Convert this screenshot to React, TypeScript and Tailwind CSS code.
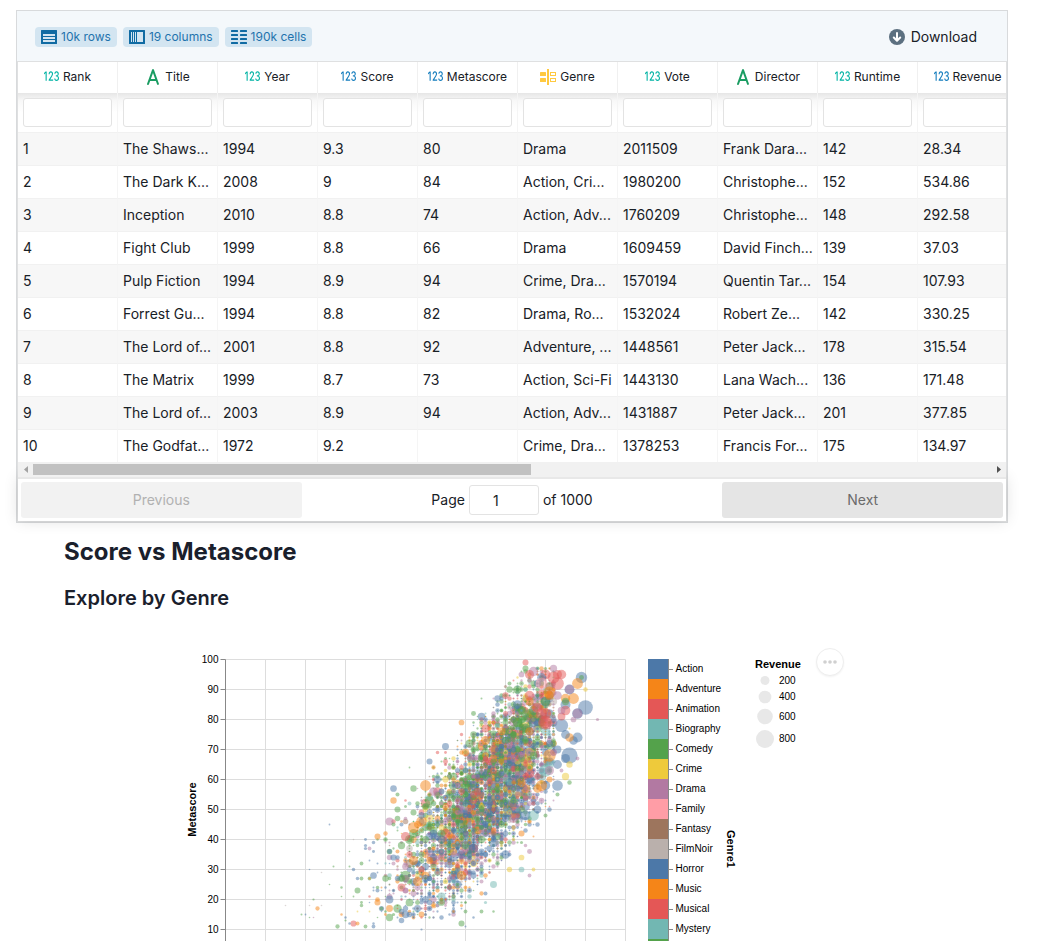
import React from "react";
import { Bs123 } from "react-icons/bs";

type IconKind = "int" | "float" | "text" | "category";

const columns: { name: string; kind: IconKind }[] = [
  { name: "Rank", kind: "int" },
  { name: "Title", kind: "text" },
  { name: "Year", kind: "int" },
  { name: "Score", kind: "float" },
  { name: "Metascore", kind: "float" },
  { name: "Genre", kind: "category" },
  { name: "Vote", kind: "int" },
  { name: "Director", kind: "text" },
  { name: "Runtime", kind: "int" },
  { name: "Revenue", kind: "float" },
];

const rows: string[][] = [
  ["1", "The Shaws...", "1994", "9.3", "80", "Drama", "2011509", "Frank Dara...", "142", "28.34"],
  ["2", "The Dark K...", "2008", "9", "84", "Action, Cri...", "1980200", "Christophe...", "152", "534.86"],
  ["3", "Inception", "2010", "8.8", "74", "Action, Adv...", "1760209", "Christophe...", "148", "292.58"],
  ["4", "Fight Club", "1999", "8.8", "66", "Drama", "1609459", "David Finch...", "139", "37.03"],
  ["5", "Pulp Fiction", "1994", "8.9", "94", "Crime, Dra...", "1570194", "Quentin Tar...", "154", "107.93"],
  ["6", "Forrest Gu...", "1994", "8.8", "82", "Drama, Ro...", "1532024", "Robert Ze...", "142", "330.25"],
  ["7", "The Lord of...", "2001", "8.8", "92", "Adventure, ...", "1448561", "Peter Jack...", "178", "315.54"],
  ["8", "The Matrix", "1999", "8.7", "73", "Action, Sci-Fi", "1443130", "Lana Wach...", "136", "171.48"],
  ["9", "The Lord of...", "2003", "8.9", "94", "Action, Adv...", "1431887", "Peter Jack...", "201", "377.85"],
  ["10", "The Godfat...", "1972", "9.2", "", "Crime, Dra...", "1378253", "Francis For...", "175", "134.97"],
];

function ColumnIcon({ kind }: { kind: IconKind }) {
  if (kind === "int" || kind === "float")
    return (
      <Bs123
        preserveAspectRatio="none"
        className={
          kind === "int"
            ? "h-[21px] w-[15px] shrink-0 text-[#00b3a4]"
            : "h-[21px] w-[15px] shrink-0 text-[#137cbd]"
        }
        aria-hidden
      />
    );
  if (kind === "text")
    return (
      <svg viewBox="0 0 16 16" className="size-4 shrink-0 fill-[#1a9c62]" aria-hidden>
        <path
          fillRule="evenodd"
          d="M13.93 14.67L8.94.67h-.01C8.79.28 8.43 0 8 0s-.79.28-.93.67h-.01l-5 14h.01c-.04.1-.07.21-.07.33a1 1 0 0 0 1.94.33L5.13 12h5.74l1.19 3.33a1 1 0 0 0 1.87-.66zM5.85 10L8 3.97 10.15 10h-4.3z"
        />
      </svg>
    );
  return (
    <svg viewBox="0 0 16 16" className="size-4 shrink-0" aria-hidden>
      <g fill="#ffc940">
        <rect x="7" y="0" width="2" height="16" />
        <rect x="0" y="3" width="6" height="4" rx=".5" />
        <rect x="0" y="9" width="6" height="4" rx=".5" />
      </g>
      <g fill="none" stroke="#ffc940">
        <rect x="10.5" y="3.5" width="5" height="3" />
        <rect x="10.5" y="9.5" width="5" height="3" />
      </g>
    </svg>
  );
}

function RowsIcon() {
  return (
    <svg viewBox="0 0 16 16" className="size-4" aria-hidden>
      <path
        fill="#106ba3"
        fillRule="evenodd"
        d="M.5 1h15a.5.5 0 0 1 .5.5v13a.5.5 0 0 1-.5.5H.5a.5.5 0 0 1-.5-.5v-13A.5.5 0 0 1 .5 1zM2 5v2h12V5zM2 8v2h12V8zM2 11v2h12v-2z"
      />
    </svg>
  );
}

function ColumnsIcon() {
  return (
    <svg viewBox="0 0 16 16" className="size-4" aria-hidden>
      <path
        fill="#106ba3"
        fillRule="evenodd"
        d="M.5 1h15a.5.5 0 0 1 .5.5v13a.5.5 0 0 1-.5.5H.5a.5.5 0 0 1-.5-.5v-13A.5.5 0 0 1 .5 1zM2 3v10h1V3zM4 3v10h1V3zM6 3v10h1V3zM8 3v10h6V3z"
      />
    </svg>
  );
}

function CellsIcon() {
  return (
    <svg viewBox="0 0 16 16" className="size-4" aria-hidden fill="#106ba3">
      {[1, 5, 9, 13].map((y) => (
        <g key={y}>
          <rect x="0" y={y} width="7" height="2" rx=".5" />
          <rect x="9" y={y} width="7" height="2" rx=".5" />
        </g>
      ))}
    </svg>
  );
}

function Badge({ icon, children }: { icon: React.ReactNode; children: React.ReactNode }) {
  return (
    <span className="flex h-5 items-center gap-1 rounded-sm bg-[#d3e5f1] px-1.5 text-xs text-[#1f73ad]">
      {icon}
      <span>{children}</span>
    </span>
  );
}

function DataTable() {
  return (
    <section className="border border-[#d8dadc]">
      <header className="flex h-[50px] items-center justify-between bg-[#f4f8fb] pt-0.5 pr-[30px] pl-[18px]">
        <div className="flex gap-1.5">
          <Badge icon={<RowsIcon />}>10k rows</Badge>
          <Badge icon={<ColumnsIcon />}>19 columns</Badge>
          <Badge icon={<CellsIcon />}>190k cells</Badge>
        </div>
        <button type="button" className="flex items-center gap-1.5 text-sm text-[#182026]">
          <svg viewBox="0 0 16 16" className="size-4" aria-hidden>
            <circle cx="8" cy="8" r="8" fill="#5c7080" />
            <path
              d="M8 4v7.500M4.800 8.500L8 11.700l3.200-3.200"
              fill="none"
              stroke="#fff"
              strokeWidth="2"
              strokeLinecap="round"
              strokeLinejoin="round"
            />
          </svg>
          <span>Download</span>
        </button>
      </header>

      <div className="border border-[#dfe0e1]">
        <div className="relative z-10 overflow-hidden bg-white">
          <table className="w-[1000px] table-fixed border-separate border-spacing-0">
            <thead>
              <tr>
                {columns.map((c) => (
                  <th key={c.name} scope="col" className="h-[31px] border-r border-[#f0f0f0] px-0 pt-0 pb-0.5 font-normal">
                    <span className="flex items-center justify-center gap-1 text-xs">
                      <ColumnIcon kind={c.kind} />
                      {c.name}
                    </span>
                  </th>
                ))}
              </tr>
              <tr>
                {columns.map((c) => (
                  <td
                    key={c.name}
                    className="h-[39px] border-r border-[#f5f5f5] bg-linear-to-b from-[#e6e6e6] via-[#f8f8f8] via-20% to-white to-50% px-[5px] py-0"
                  >
                    <input
                      type="text"
                      aria-label={`Filter ${c.name}`}
                      className="block h-[29px] w-full rounded-[3px] border border-[#e3e3e3] bg-white px-2 text-sm outline-none"
                    />
                  </td>
                ))}
              </tr>
            </thead>
            <tbody>
              {rows.map((r) => (
                <tr key={r[0]} className="odd:bg-[#f7f7f7]">
                  {r.map((v, i) => (
                    <td
                      key={columns[i].name}
                      className="h-[33px] border-t border-r border-t-[#f1f1f1] border-r-[#f5f5f5] px-[5px] py-0 text-sm whitespace-nowrap"
                    >
                      {v}
                    </td>
                  ))}
                </tr>
              ))}
            </tbody>
          </table>
          <div className="flex h-[15px] items-center bg-[#f1f1f1]" aria-hidden>
            <span className="flex w-[15px] justify-center">
              <svg viewBox="0 0 4 7" className="h-[7px] w-1">
                <path d="M4 0v7L0 3.500z" fill="#a3a3a3" />
              </svg>
            </span>
            <div className="flex-1">
              <div className="h-[11px] w-[52%] bg-[#c1c1c1]" />
            </div>
            <span className="flex w-[15px] justify-center">
              <svg viewBox="0 0 4 7" className="h-[7px] w-1">
                <path d="M0 0v7l4-3.500z" fill="#505050" />
              </svg>
            </span>
          </div>
        </div>

        <nav className="flex items-center border-t-2 border-[#e8e8e8] p-[3px] text-sm shadow-[0_0_15px_0_rgba(0,0,0,0.12)]">
          <button
            type="button"
            disabled
            className="h-9 flex-1 rounded-[3px] bg-[#f2f2f2] text-[#b1b1b1]"
          >
            Previous
          </button>
          <div className="flex flex-[1.5] items-center justify-center gap-1">
            <label htmlFor="page">Page</label>
            <input
              id="page"
              type="text"
              defaultValue="1"
              className="h-[30px] w-[70px] rounded-[3px] border border-[#e3e3e3] pr-4 text-center outline-none"
            />
            <span>of 1000</span>
          </div>
          <button type="button" className="h-9 flex-1 rounded-[3px] bg-[#e5e5e5] text-[#6b6b6b]">
            Next
          </button>
        </nav>
      </div>
    </section>
  );
}

const B = "#4c78a8";
const O = "#f58518";
const R = "#e45756";
const T = "#72b7b2";
const G = "#54a24b";
const Y = "#eeca3b";
const P = "#b279a2";
const F = "#ff9da6";
const W = "#9d755d";
const N = "#bab0ac";

const genres: [string, string][] = [
  ["Action", B],
  ["Adventure", O],
  ["Animation", R],
  ["Biography", T],
  ["Comedy", G],
  ["Crime", Y],
  ["Drama", P],
  ["Family", F],
  ["Fantasy", W],
  ["FilmNoir", N],
  ["Horror", B],
  ["Music", O],
  ["Musical", R],
  ["Mystery", T],
  ["Romance", G],
];

// score × 10, metascore, colour, revenue in millions
type Film = [number, number, string, number];

const notable: Film[] = [
  [42, 57, B, 110], [43, 55, G, 40], [42, 53, O, 100], [43, 50, G, 90], [43, 47, G, 75], [41, 46, P, 160],
  [42, 45, G, 40], [44, 45, B, 40], [26, 45, B, 8], [38, 41, O, 90], [45, 41, R, 200], [37, 39, B, 30],
  [35, 40, B, 20], [35, 38, B, 25], [35, 37, B, 25], [36, 37, P, 35], [37, 36, B, 22], [41, 36, G, 80],
  [41, 36, B, 60], [43, 36, O, 40], [44, 38, G, 130], [34, 32, G, 35], [32, 30, B, 30], [21, 30, B, 5],
  [37, 28, B, 110], [33, 27, B, 30], [34, 27, G, 35], [36, 27, G, 35], [36, 27, O, 15], [40, 27, G, 100],
  [33, 23, G, 85], [38, 23, B, 40], [38, 24, G, 30], [44, 24, R, 150], [45, 23, P, 90], [41, 20, B, 150],
  [38, 19, O, 90], [44, 16, B, 75], [44, 13, B, 75], [34, 18, G, 30], [34, 19, G, 20], [32, 12, R, 95],
  [33, 12, O, 40], [31, 12, B, 15], [30, 13, G, 12], [28, 11, G, 45], [35, 11, G, 35], [37, 11, B, 35],
  [37, 12, B, 15], [23, 17, O, 45], [22, 20, G, 12], [19, 15, G, 10], [20, 15, B, 8], [15, 18, N, 5],
  [21, 18, N, 5], [29, 24, G, 15], [29, 21, G, 6], [29, 15, O, 15], [39, 17, G, 35], [44, 27, G, 120],
  [43, 27, B, 70], [45, 31, P, 110], [43, 34, B, 50], [42, 32, P, 40], [30, 14, B, 15], [26, 25, G, 5],
  [27, 31, G, 10], [31, 31, G, 10], [32, 21, G, 8], [24, 18, N, 5], [33, 16, Y, 8], [36, 16, Y, 8],
  [40, 15, O, 20], [22, 14, P, 5], [21, 14, G, 5], [24, 29, N, 5], [32, 40, N, 5], [36, 21, R, 15],
  [31, 36, G, 4], [36, 33, B, 8], [36, 19, B, 6], [37, 23, B, 10], [37, 24, B, 10], [40, 24, B, 15],
  [90, 84, B, 534], [89, 94, B, 320], [89, 94, G, 60], [88, 92, O, 290], [87, 87, O, 290], [86, 90, B, 250],
  [86, 90, P, 220], [88, 82, B, 280], [88, 82, P, 250], [84, 78, B, 430], [88, 74, B, 250], [87, 73, B, 180],
  [86, 74, O, 180], [85, 75, B, 190], [86, 68, B, 650], [85, 67, B, 200], [83, 65, B, 190], [86, 65, Y, 100],
  [85, 61, Y, 130], [83, 58, B, 280], [86, 59, G, 50], [83, 55, G, 40], [81, 68, O, 380], [79, 58, O, 300],
  [78, 57, O, 180], [80, 63, T, 380], [81, 63, P, 200], [80, 79, R, 480], [80, 82, R, 300], [79, 82, R, 300],
  [80, 79, R, 300], [78, 84, R, 250], [83, 92, R, 400], [82, 94, R, 350], [84, 95, R, 220], [80, 95, R, 250],
  [83, 95, R, 200], [77, 96, P, 220], [76, 95, R, 200], [75, 99, R, 90], [75, 97, G, 90], [74, 95, P, 80],
  [82, 97, P, 130], [79, 94, B, 190], [79, 92, F, 350], [81, 91, W, 150], [80, 86, B, 250], [80, 86, G, 200],
  [81, 89, O, 350], [81, 88, O, 200], [85, 87, O, 220], [85, 85, B, 250], [85, 86, G, 130], [84, 81, R, 150],
  [85, 83, R, 230], [84, 83, P, 140], [87, 80, P, 80], [93, 80, P, 25], [90, 90, Y, 50], [86, 77, Y, 12],
  [88, 67, P, 35], [84, 63, P, 35], [83, 88, P, 180], [83, 70, B, 150], [82, 69, P, 120], [81, 72, B, 120],
  [50, 58, O, 290], [59, 79, O, 80], [64, 81, B, 140], [68, 87, B, 100], [62, 82, G, 60], [70, 88, R, 100],
  [65, 77, R, 160], [65, 73, O, 200], [55, 71, B, 120], [55, 66, R, 60], [51, 66, B, 90], [53, 69, R, 30],
  [52, 64, O, 45], [53, 60, B, 120], [47, 57, G, 100], [52, 56, P, 180], [61, 72, G, 160], [62, 75, G, 100],
  [60, 69, O, 130], [46, 64, G, 8], [64, 87, G, 10], [47, 49, G, 90], [49, 46, O, 280], [47, 44, O, 300],
  [48, 45, O, 120], [46, 35, R, 100], [47, 33, O, 200], [49, 48, B, 100], [70, 35, B, 180], [75, 48, B, 240],
  [77, 48, T, 280], [78, 50, B, 140], [79, 53, P, 80], [78, 45, B, 50], [74, 42, O, 90], [72, 47, P, 200],
  [76, 36, P, 60], [75, 38, P, 30], [74, 34, Y, 80], [71, 30, Y, 70], [74, 30, T, 80], [77, 30, Y, 35],
  [76, 28, P, 35], [67, 25, T, 120], [64, 22, O, 45], [65, 22, B, 40], [61, 23, B, 60], [65, 19, T, 25],
  [59, 12, G, 90], [60, 11, B, 10], [54, 19, G, 110], [60, 16, G, 35], [64, 16, G, 35], [67, 16, G, 15],
  [62, 14, B, 15], [49, 10, B, 12], [59, 28, O, 220], [62, 28, B, 90], [64, 26, P, 40], [71, 90, G, 100],
  [73, 90, G, 160], [77, 41, O, 10], [76, 76, O, 180], [69, 76, O, 160],
];

const palette: [string, number][] = [
  [B, 0.27], [G, 0.24], [P, 0.2], [O, 0.08], [R, 0.08], [T, 0.05], [Y, 0.04], [W, 0.02], [N, 0.02],
];

const trend = (score: number) => 55 + (score - 65) * 1.45;

function generateFilms(count: number): Film[] {
  let seed = 20190817;
  const rand = () => {
    seed = (seed + 0x6d2b79f5) | 0;
    let t = Math.imul(seed ^ (seed >>> 15), 1 | seed);
    t = (t + Math.imul(t ^ (t >>> 7), 61 | t)) ^ t;
    return ((t ^ (t >>> 14)) >>> 0) / 4294967296;
  };
  const normal = () => Math.sqrt(-2 * Math.log(1 - rand())) * Math.cos(2 * Math.PI * rand());
  const films: Film[] = [];
  while (films.length < count) {
    const z = normal();
    const score = Math.round(66 + z * (z < 0 ? 10.5 : 9));
    const drift = normal() * 12.5;
    const meta = Math.round(trend(score) + drift);
    if (score > 82 || score < 38 || meta > 97 || meta < 14) continue;
    if (Math.abs(drift) > 29) continue;
    let pick = rand();
    let color = B;
    for (const [c, w] of palette) {
      if (pick < w) {
        color = c;
        break;
      }
      pick -= w;
    }
    if (color === G && drift < -8 && rand() < 0.5) color = B;
    if (color === B && drift > 6 && rand() < 0.5) color = G;
    const mean = color === P || color === T ? 35 : 48;
    const lift = score > 70 ? 1.5 : 1;
    const limit = Math.abs(drift) > 20 ? 50 : 220;
    const revenue = rand() < 0.42 ? 1 + rand() * 14 : Math.min(limit, -Math.log(1 - rand()) * mean * lift);
    films.push([score, meta, color, revenue]);
  }
  return films;
}

const films: Film[] = [...generateFilms(5600), ...notable];

const radius = (revenue: number) => Math.max(0.8, Math.sqrt(revenue / 800) * 9);

function ScatterChart() {
  const ticks = [100, 90, 80, 70, 60, 50, 40, 30, 20, 10, 0];
  return (
    <svg
      viewBox="0 0 664 420"
      className="block h-[420px] w-[664px] font-['Liberation_Sans',Arial,sans-serif] text-[10px]"
      role="img"
      aria-label="Score vs Metascore scatter plot"
    >
      <g transform="translate(45.500 11.500)">
        <g stroke="#ddd">
          {ticks.map((t) => (
            <line key={t} x1="0" x2="400" y1={(100 - t) * 3} y2={(100 - t) * 3} />
          ))}
          {ticks.map((t) => (
            <line key={t} x1={t * 4} x2={t * 4} y1="0" y2="300" />
          ))}
        </g>
        <g stroke="#888">
          <line x1="0" x2="0" y1="0" y2="300" />
          {ticks.map((t) => (
            <line key={t} x1="-5" x2="0" y1={(100 - t) * 3} y2={(100 - t) * 3} />
          ))}
        </g>
        <g textAnchor="end" fill="#000">
          {ticks.map((t) => (
            <text key={t} x="-7" y={(100 - t) * 3 + 3}>
              {t}
            </text>
          ))}
        </g>
        <text transform="translate(-30 150) rotate(-90)" textAnchor="middle" className="text-[11px] font-bold">
          Metascore
        </text>
        <g fillOpacity="0.5">
          {films.map(([score, meta, color, revenue], i) => (
            <circle key={i} cx={score * 4} cy={(100 - meta) * 3} r={radius(revenue)} fill={color} />
          ))}
        </g>
      </g>

      <g transform="translate(468 11)">
        {genres.map(([name, color], i) => (
          <g key={name}>
            <rect x="0" y={i * 20} width="20" height="20" fill={color} />
            <line x1="20" x2="25" y1={i * 20 + 10.5} y2={i * 20 + 10.5} stroke="#888" />
            <text x="27.5" y={i * 20 + 13}>
              {name}
            </text>
          </g>
        ))}
        <line x1="20.5" x2="20.5" y1="0" y2="300" stroke="#888" />
        <text transform="translate(79 190) rotate(90)" textAnchor="middle" className="text-[11px] font-bold">
          Genre1
        </text>
      </g>

      <g transform="translate(575 0)">
        <text x="0" y="20" className="text-[11px] font-bold">
          Revenue
        </text>
        {[
          [200, 32.5],
          [400, 49],
          [600, 68.5],
          [800, 91],
        ].map(([value, y]) => (
          <g key={value}>
            <circle cx="10" cy={y} r={radius(value)} fill="#e8e8e8" />
            <text x="24" y={Math.round(y + 3)}>
              {value}
            </text>
          </g>
        ))}
      </g>
    </svg>
  );
}

export default function App() {
  return (
    <main className="h-screen overflow-hidden bg-white pt-2.5 pr-8 pl-4 font-[Inter,'Noto_Sans',sans-serif] text-[#182026]">
      <DataTable />
      <div className="px-12 pt-[13px] text-[#1a202c]">
        <h2 className="text-2xl leading-8 font-bold">Score vs Metascore</h2>
        <h3 className="mt-4 text-xl leading-7 font-semibold">Explore by Genre</h3>
      </div>
      <div className="relative mx-auto mt-9 w-[664px]">
        <ScatterChart />
        <button
          type="button"
          aria-label="Chart actions"
          className="absolute top-0 right-0 flex size-7 items-center justify-center rounded-full border border-[#eee] bg-white shadow-xs"
        >
          <svg viewBox="0 0 14 4" className="h-1 w-3.5 fill-[#d0d0d0]" aria-hidden>
            <circle cx="2" cy="2" r="1.800" />
            <circle cx="7" cy="2" r="1.800" />
            <circle cx="12" cy="2" r="1.800" />
          </svg>
        </button>
      </div>
    </main>
  );
}
